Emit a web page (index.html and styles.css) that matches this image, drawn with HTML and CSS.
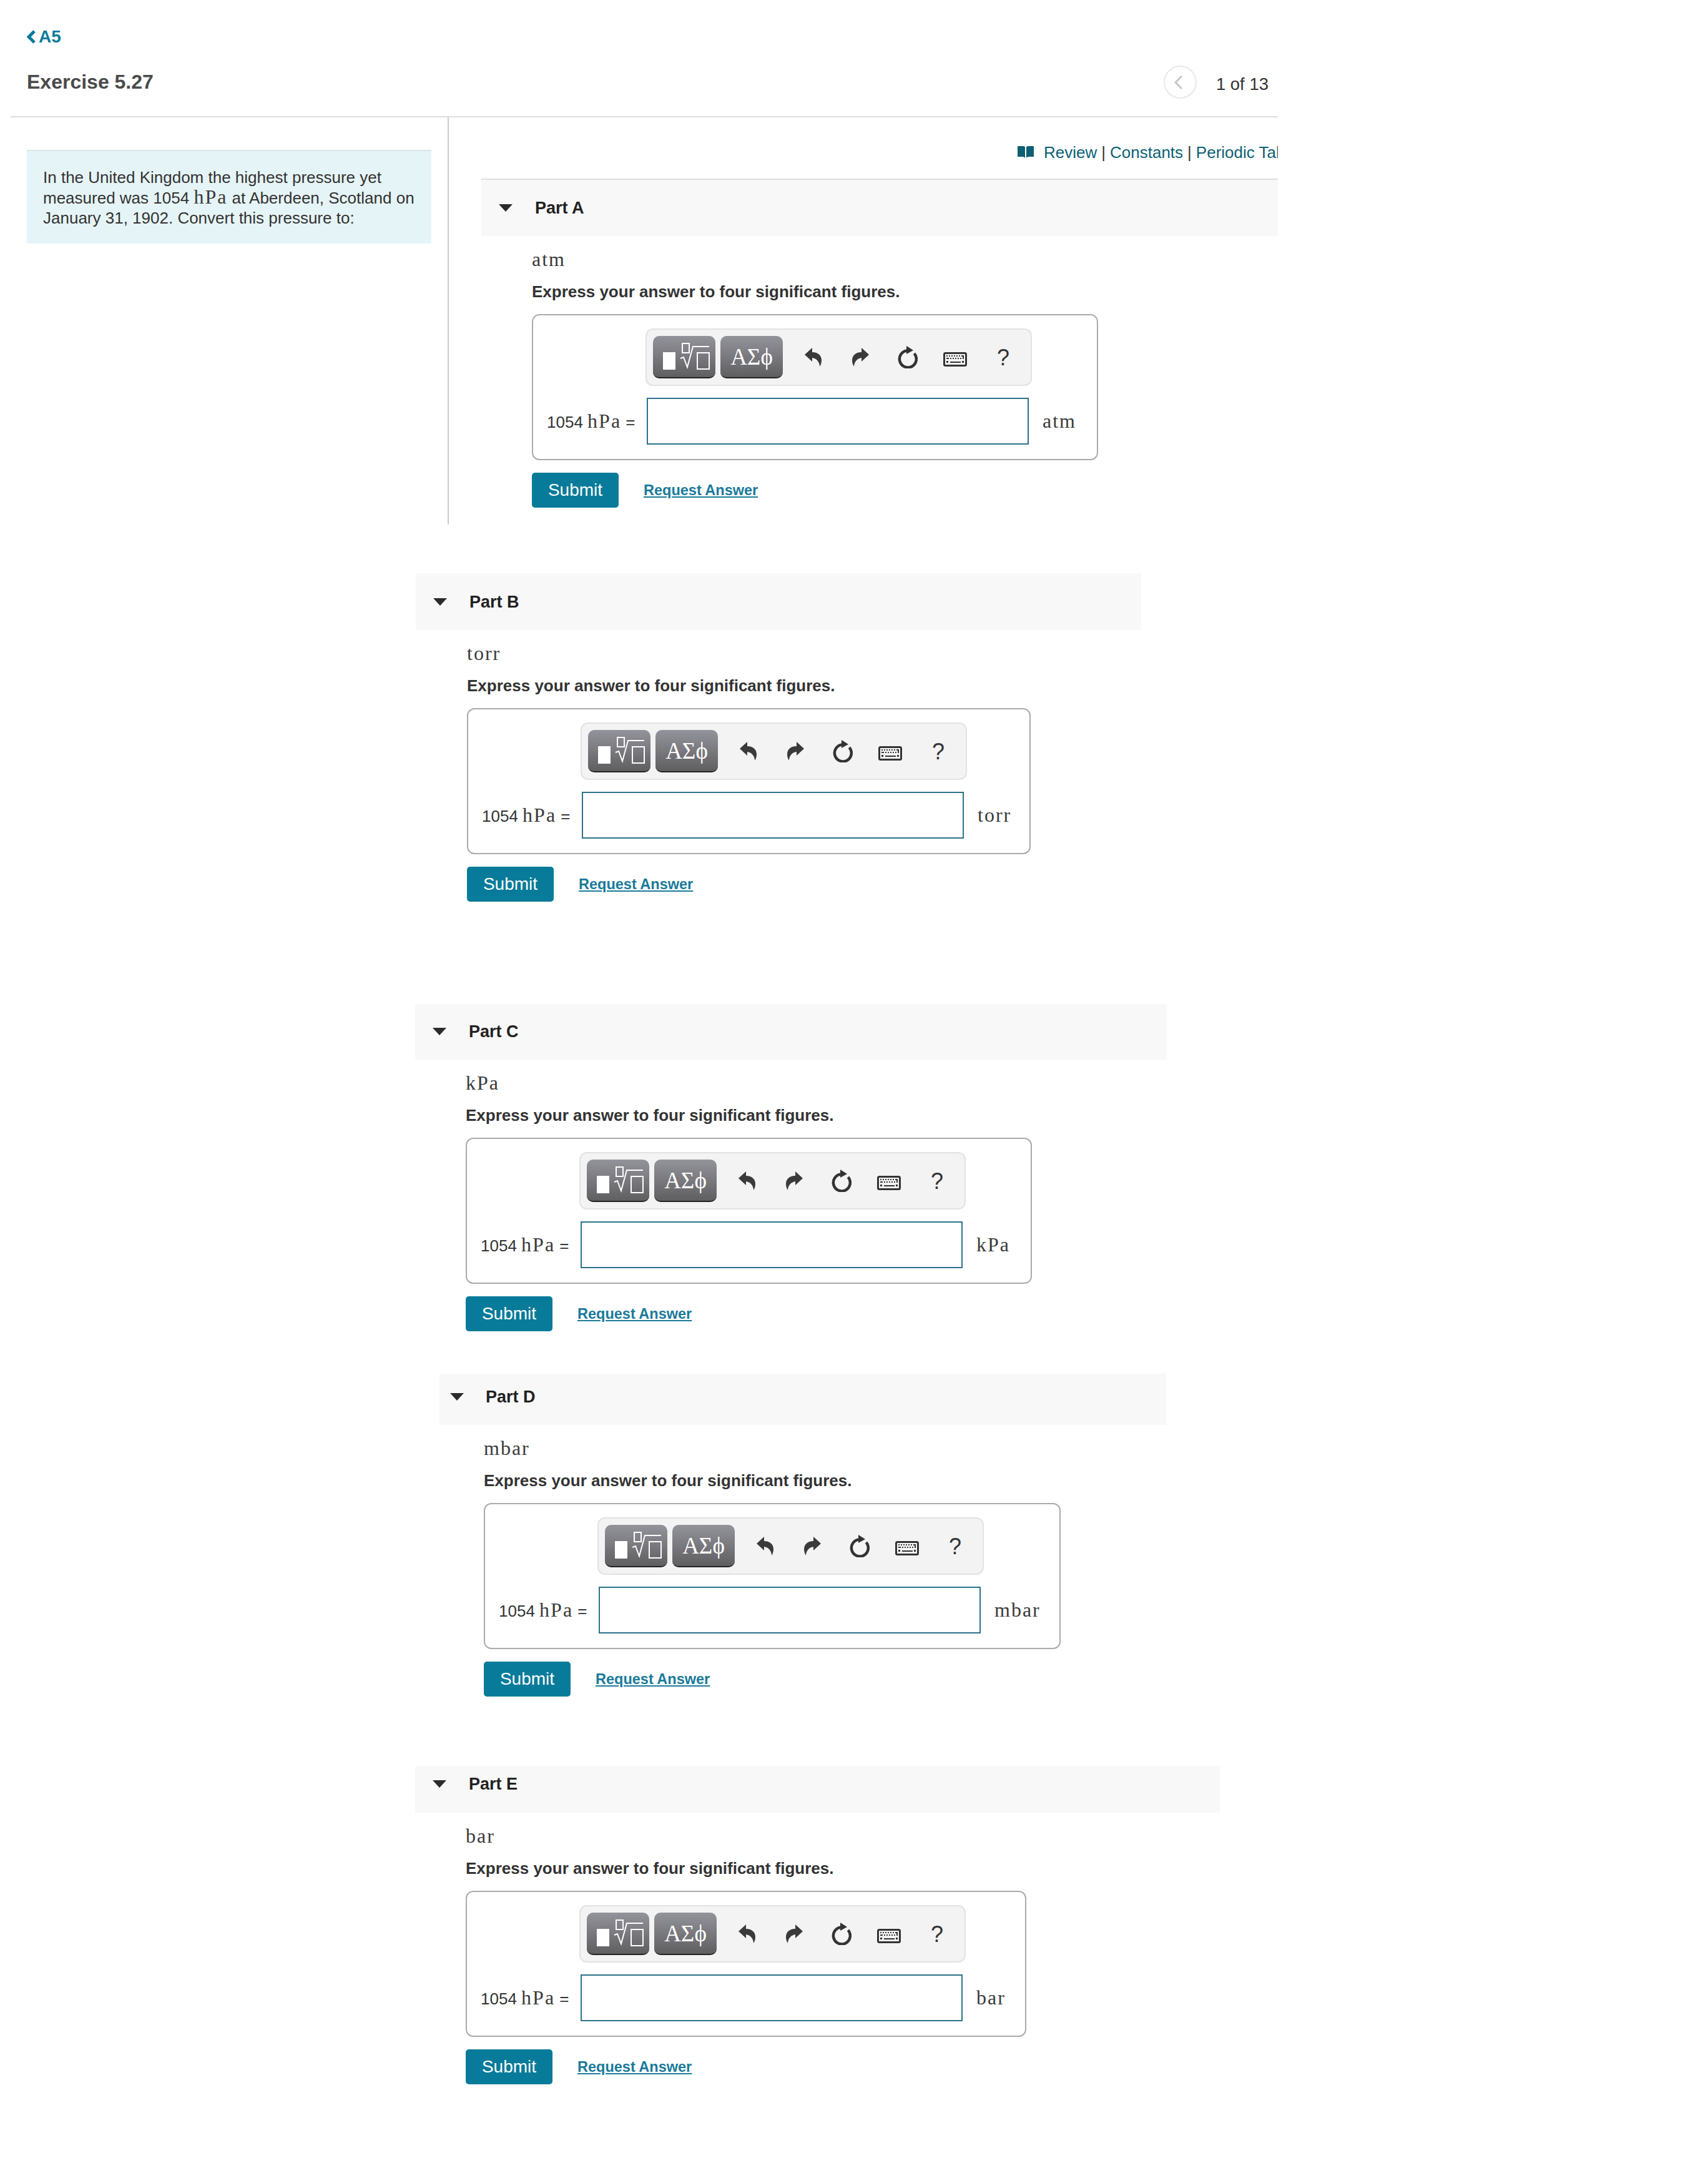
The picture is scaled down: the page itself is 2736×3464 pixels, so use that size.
FILE: index.html
```html
<!DOCTYPE html>
<html lang="en">
<head>
	<meta charset="UTF-8">
	<title>Exercise 5.27</title>
	<link rel="stylesheet" href="styles.css">
</head>
<body>
	<svg class="sprite" xmlns="http://www.w3.org/2000/svg">
		<symbol id="ic-templates" viewBox="0 0 100 68">
			<rect x="16" y="26" width="20" height="28" fill="#fff"/>
			<rect x="47" y="12" width="11" height="15" fill="none" stroke="#fff" stroke-width="2"/>
			<polyline points="44,36 49,34 55,50 64,17 90,17" fill="none" stroke="#fff" stroke-width="2"/>
			<rect x="71" y="27" width="19" height="26" fill="none" stroke="#fff" stroke-width="2"/>
		</symbol>
		<symbol id="ic-undo" viewBox="0 0 27 30">
			<path d="M0 11 12 0V7C22 7 27 13 27 20 27 24 26 27 24 30 24 24 20 17 12 16V22Z" fill="#3a3a3a"/>
		</symbol>
		<symbol id="ic-reset" viewBox="0 0 32 36">
			<path d="M15 7.5A13.5 13.5 0 1 0 26.5 12" fill="none" stroke="#333" stroke-width="4.5"/>
			<polygon points="14,0 25,7 14,13" fill="#333"/>
		</symbol>
		<symbol id="ic-keyboard" viewBox="0 0 38 23">
			<rect x="1.5" y="1.5" width="35" height="20" rx="2" fill="none" stroke="#333" stroke-width="3"/>
			<path d="M5 5h2v2H5zM9 5h2v2H9zM13 5h2v2h-2zM17 5h2v2h-2zM21 5h2v2h-2zM25 5h2v2h-2zM29 5h4v6h-2V7h-2zM5 9h4v2H5zM11 9h2v2h-2zM15 9h2v2h-2zM19 9h2v2h-2zM23 9h2v2h-2zM27 9h2v2h-2zM5 14h3v3H5zM11 15h17v2H11zM30 14h3v3h-3z" fill="#333"/>
		</symbol>
	</svg>

	<div class="top">
		<header class="page-head">
			<a class="back" href="#">
				<svg class="back-icon" viewBox="0 0 14 22"><polyline points="12,2 3,11 12,20" fill="none" stroke="currentColor" stroke-width="5"/></svg>
				A5
			</a>
			<div class="title-row">
				<h1>Exercise 5.27</h1>
				<div class="pager">
					<span class="pager-btn">
						<svg viewBox="0 0 14 22"><polyline points="12,1 2,11 12,21" fill="none" stroke="#c4c4c4" stroke-width="3"/></svg>
					</span>
					<span>1 of 13</span>
				</div>
			</div>
		</header>
		<div class="columns">
			<div class="left-col">
				<div class="intro">
					In the United Kingdom the highest pressure yet measured was 1054 <span class="math">hPa</span> at Aberdeen, Scotland on January 31, 1902. Convert this pressure to:
				</div>
			</div>
			<div class="right-col">
				<div class="links">
					<svg class="book" viewBox="0 0 26 20"><path d="M0 0h9c2 0 3 1 3 2v17c-1-1-2-2-4-2H0zM26 0h-9c-2 0-3 1-3 2v17c1-1 2-2 4-2h8z" fill="#0d5f74"/></svg>
					<a href="#">Review</a><i>|</i><a href="#">Constants</a><i>|</i><a href="#">Periodic Table</a>
				</div>

				<section class="part part-a">
					<div class="part-head"><span class="arrow"></span>Part A</div>
					<div class="part-body">
						<p class="unit-name math">atm</p>
						<p class="instruction">Express your answer to four significant figures.</p>
						<div class="answer-box">
							<div class="toolbar">
								<button class="tool-btn"><svg><use href="#ic-templates"/></svg></button>
								<button class="tool-btn greek">ΑΣϕ</button>
								<span class="tool"><svg class="ic-arrow"><use href="#ic-undo"/></svg></span>
								<span class="tool"><svg class="ic-arrow flip"><use href="#ic-undo"/></svg></span>
								<span class="tool"><svg class="ic-reset"><use href="#ic-reset"/></svg></span>
								<span class="tool"><svg class="ic-keyboard"><use href="#ic-keyboard"/></svg></span>
								<span class="tool help">?</span>
							</div>
							<label class="eq">1054 <span class="math">hPa</span> =</label>
							<input class="answer" type="text">
							<span class="unit math">atm</span>
						</div>
						<div class="actions">
							<button class="submit">Submit</button>
							<a class="request" href="#">Request Answer</a>
						</div>
					</div>
				</section>
			</div>
		</div>
	</div>

	<section class="part part-b">
		<div class="part-head"><span class="arrow"></span>Part B</div>
		<div class="part-body">
			<p class="unit-name math">torr</p>
			<p class="instruction">Express your answer to four significant figures.</p>
			<div class="answer-box">
				<div class="toolbar">
					<button class="tool-btn"><svg><use href="#ic-templates"/></svg></button>
					<button class="tool-btn greek">ΑΣϕ</button>
					<span class="tool"><svg class="ic-arrow"><use href="#ic-undo"/></svg></span>
					<span class="tool"><svg class="ic-arrow flip"><use href="#ic-undo"/></svg></span>
					<span class="tool"><svg class="ic-reset"><use href="#ic-reset"/></svg></span>
					<span class="tool"><svg class="ic-keyboard"><use href="#ic-keyboard"/></svg></span>
					<span class="tool help">?</span>
				</div>
				<label class="eq">1054 <span class="math">hPa</span> =</label>
				<input class="answer" type="text">
				<span class="unit math">torr</span>
			</div>
			<div class="actions">
				<button class="submit">Submit</button>
				<a class="request" href="#">Request Answer</a>
			</div>
		</div>
	</section>

	<section class="part part-c">
		<div class="part-head"><span class="arrow"></span>Part C</div>
		<div class="part-body">
			<p class="unit-name math">kPa</p>
			<p class="instruction">Express your answer to four significant figures.</p>
			<div class="answer-box">
				<div class="toolbar">
					<button class="tool-btn"><svg><use href="#ic-templates"/></svg></button>
					<button class="tool-btn greek">ΑΣϕ</button>
					<span class="tool"><svg class="ic-arrow"><use href="#ic-undo"/></svg></span>
					<span class="tool"><svg class="ic-arrow flip"><use href="#ic-undo"/></svg></span>
					<span class="tool"><svg class="ic-reset"><use href="#ic-reset"/></svg></span>
					<span class="tool"><svg class="ic-keyboard"><use href="#ic-keyboard"/></svg></span>
					<span class="tool help">?</span>
				</div>
				<label class="eq">1054 <span class="math">hPa</span> =</label>
				<input class="answer" type="text">
				<span class="unit math">kPa</span>
			</div>
			<div class="actions">
				<button class="submit">Submit</button>
				<a class="request" href="#">Request Answer</a>
			</div>
		</div>
	</section>

	<section class="part part-d">
		<div class="part-head"><span class="arrow"></span>Part D</div>
		<div class="part-body">
			<p class="unit-name math">mbar</p>
			<p class="instruction">Express your answer to four significant figures.</p>
			<div class="answer-box">
				<div class="toolbar">
					<button class="tool-btn"><svg><use href="#ic-templates"/></svg></button>
					<button class="tool-btn greek">ΑΣϕ</button>
					<span class="tool"><svg class="ic-arrow"><use href="#ic-undo"/></svg></span>
					<span class="tool"><svg class="ic-arrow flip"><use href="#ic-undo"/></svg></span>
					<span class="tool"><svg class="ic-reset"><use href="#ic-reset"/></svg></span>
					<span class="tool"><svg class="ic-keyboard"><use href="#ic-keyboard"/></svg></span>
					<span class="tool help">?</span>
				</div>
				<label class="eq">1054 <span class="math">hPa</span> =</label>
				<input class="answer" type="text">
				<span class="unit math">mbar</span>
			</div>
			<div class="actions">
				<button class="submit">Submit</button>
				<a class="request" href="#">Request Answer</a>
			</div>
		</div>
	</section>

	<section class="part part-e">
		<div class="part-head"><span class="arrow"></span>Part E</div>
		<div class="part-body">
			<p class="unit-name math">bar</p>
			<p class="instruction">Express your answer to four significant figures.</p>
			<div class="answer-box">
				<div class="toolbar">
					<button class="tool-btn"><svg><use href="#ic-templates"/></svg></button>
					<button class="tool-btn greek">ΑΣϕ</button>
					<span class="tool"><svg class="ic-arrow"><use href="#ic-undo"/></svg></span>
					<span class="tool"><svg class="ic-arrow flip"><use href="#ic-undo"/></svg></span>
					<span class="tool"><svg class="ic-reset"><use href="#ic-reset"/></svg></span>
					<span class="tool"><svg class="ic-keyboard"><use href="#ic-keyboard"/></svg></span>
					<span class="tool help">?</span>
				</div>
				<label class="eq">1054 <span class="math">hPa</span> =</label>
				<input class="answer" type="text">
				<span class="unit math">bar</span>
			</div>
			<div class="actions">
				<button class="submit">Submit</button>
				<a class="request" href="#">Request Answer</a>
			</div>
		</div>
	</section>
</body>
</html>
```

FILE: styles.css
```css
* {
	box-sizing: border-box;
}
html, body {
	margin: 0;
	padding: 0;
}
body {
	background: #fff;
	color: #333;
	font-family: "Liberation Sans", Arial, sans-serif;
	font-size: 26px;
	padding-bottom: 126px;
}
.sprite {
	display: none;
}
.math {
	color: #3a3a3a;
	font-family: "Liberation Serif", "Times New Roman", serif;
	font-size: 32px;
	letter-spacing: 2px;
}
.top {
	width: 2047px;
}
.page-head {
	margin-left: 17px;
	padding: 43px 15px 28px 26px;
	border-bottom: 2px solid #ddd;
}
.back {
	display: flex;
	align-items: center;
	gap: 5px;
	height: 32px;
	color: #0a7a9b;
	font-size: 28px;
	font-weight: bold;
	text-decoration: none;
}
.back-icon {
	width: 14px;
	height: 22px;
}
.title-row {
	display: flex;
	align-items: center;
	justify-content: space-between;
	margin-top: 30px;
}
.title-row h1 {
	margin: 0;
	color: #4a4a4a;
	font-size: 32px;
	font-weight: bold;
}
.pager {
	display: flex;
	align-items: center;
	gap: 31px;
	font-size: 27.5px;
}
.pager span:last-child {
	padding-top: 7px;
}
.pager-btn {
	display: flex;
	align-items: center;
	justify-content: center;
	width: 53px;
	height: 53px;
	padding-right: 4px;
	border: 2px solid #e8e8e8;
	border-radius: 50%;
}
.pager-btn svg {
	width: 14px;
	height: 22px;
}
.columns {
	display: flex;
}
.left-col {
	width: 717px;
	padding: 52px 26px 0 43px;
}
.intro {
	width: 648px;
	padding: 26px 20px 25px 26px;
	border-top: 2px solid #d9e5e8;
	background: #e5f4f6;
	line-height: 32px;
}
.intro .math {
	line-height: 30px;
}
.right-col {
	flex: 1;
	min-width: 0;
	overflow: hidden;
	padding-bottom: 27px;
	border-left: 2px solid #c8ccd4;
}
.links {
	display: flex;
	align-items: center;
	height: 98px;
	padding: 14px 0 0 911px;
	white-space: nowrap;
}
.links a {
	color: #0d5f74;
	text-decoration: none;
}
.links i {
	margin: 0 7px;
	font-style: normal;
}
.book {
	flex: none;
	width: 26px;
	height: 20px;
	margin-right: 16px;
}
.part-head {
	display: flex;
	align-items: center;
	padding: 31px 0 30px 28px;
	background: #f8f8f8;
	color: #222;
	font-size: 27px;
	font-weight: bold;
	line-height: 30px;
}
.arrow {
	width: 0;
	height: 0;
	margin-right: 36px;
	border-style: solid;
	border-width: 12px 11px 0 11px;
	border-color: #2b2b2b transparent transparent transparent;
}
.part-body {
	padding-left: 81px;
}
.unit-name {
	margin: 0;
	padding-top: 18px;
	line-height: 38px;
}
.instruction {
	margin: 0;
	padding-top: 16px;
	color: #333;
	font-weight: bold;
	line-height: 34px;
}
.answer-box {
	display: grid;
	grid-template-columns: 160px 612px auto;
	align-items: center;
	row-gap: 19px;
	height: 234px;
	margin-top: 19px;
	padding: 21px 0 23px 22px;
	border: 2px solid #aaa;
	border-radius: 12px;
}
.toolbar {
	grid-column: 2 / 4;
	display: flex;
	align-items: center;
	width: 619px;
	height: 92px;
	margin-left: -2px;
	padding-left: 10px;
	border: 2px solid #e2e2e2;
	border-radius: 12px;
	background: #f3f3f3;
}
.tool-btn {
	width: 100px;
	height: 68px;
	margin-right: 8px;
	padding: 0;
	border: none;
	border-bottom: 2px solid #222;
	border-radius: 10px;
	background: linear-gradient(#93939b, #5f5f61);
	color: #fff;
}
.tool-btn svg {
	display: block;
	width: 100px;
	height: 68px;
}
.greek {
	font-family: "Liberation Serif", serif;
	font-size: 37px;
}
.tool {
	display: flex;
	align-items: center;
	justify-content: center;
	width: 76px;
}
.tool:nth-of-type(1) {
	margin-left: 2px;
}
.ic-arrow {
	width: 27px;
	height: 30px;
}
.flip {
	transform: scaleX(-1);
}
.ic-reset {
	width: 32px;
	height: 36px;
}
.ic-keyboard {
	width: 38px;
	height: 23px;
	margin-top: 6px;
}
.help {
	padding: 2px 0 0 2px;
	font-size: 36px;
}
.eq {
	font-size: 26px;
	white-space: nowrap;
}
.answer {
	width: 612px;
	height: 75px;
	border: 2px solid #2a7288;
	border-radius: 0;
	background: #fff;
}
.unit {
	padding-left: 22px;
}
.actions {
	display: flex;
	align-items: center;
	gap: 40px;
	margin-top: 20px;
}
.submit {
	width: 139px;
	height: 56px;
	padding: 0;
	border: none;
	border-radius: 5px;
	background: #087b9a;
	color: #fff;
	font-family: "Liberation Sans", Arial, sans-serif;
	font-size: 28px;
}
.request {
	color: #1a7a9a;
	font-size: 23.5px;
	font-weight: bold;
	text-decoration: underline;
}
/* each part sits at its own offset in the scrolled page */
.part-a {
	margin-left: 52px;
}
.part-a .part-head {
	padding-top: 30px;
	border-top: 2px solid #dedede;
}
.part-a .answer-box {
	width: 907px;
}
.part-b {
	width: 1162px;
	margin: 78px 0 0 666px;
}
.part-b .answer-box {
	width: 903px;
}
.part-b .part-body {
	padding-left: 82px;
}
.part-c {
	width: 1204px;
	margin: 164px 0 0 665px;
}
.part-c .part-head {
	padding-top: 29px;
}
.part-c .answer-box {
	width: 907px;
}
.part-d {
	width: 1164px;
	margin: 68px 0 0 704px;
}
.part-d .part-head {
	padding: 22px 0 30px 17px;
}
.part-d .arrow {
	margin-right: 35px;
}
.part-d .answer-box {
	width: 924px;
}
.part-d .part-body {
	padding-left: 71px;
}
.part-e {
	width: 1289px;
	margin: 111px 0 0 665px;
}
.part-e .part-head {
	padding: 14px 0 31px 28px;
}
.part-e .answer-box {
	width: 898px;
}
```
